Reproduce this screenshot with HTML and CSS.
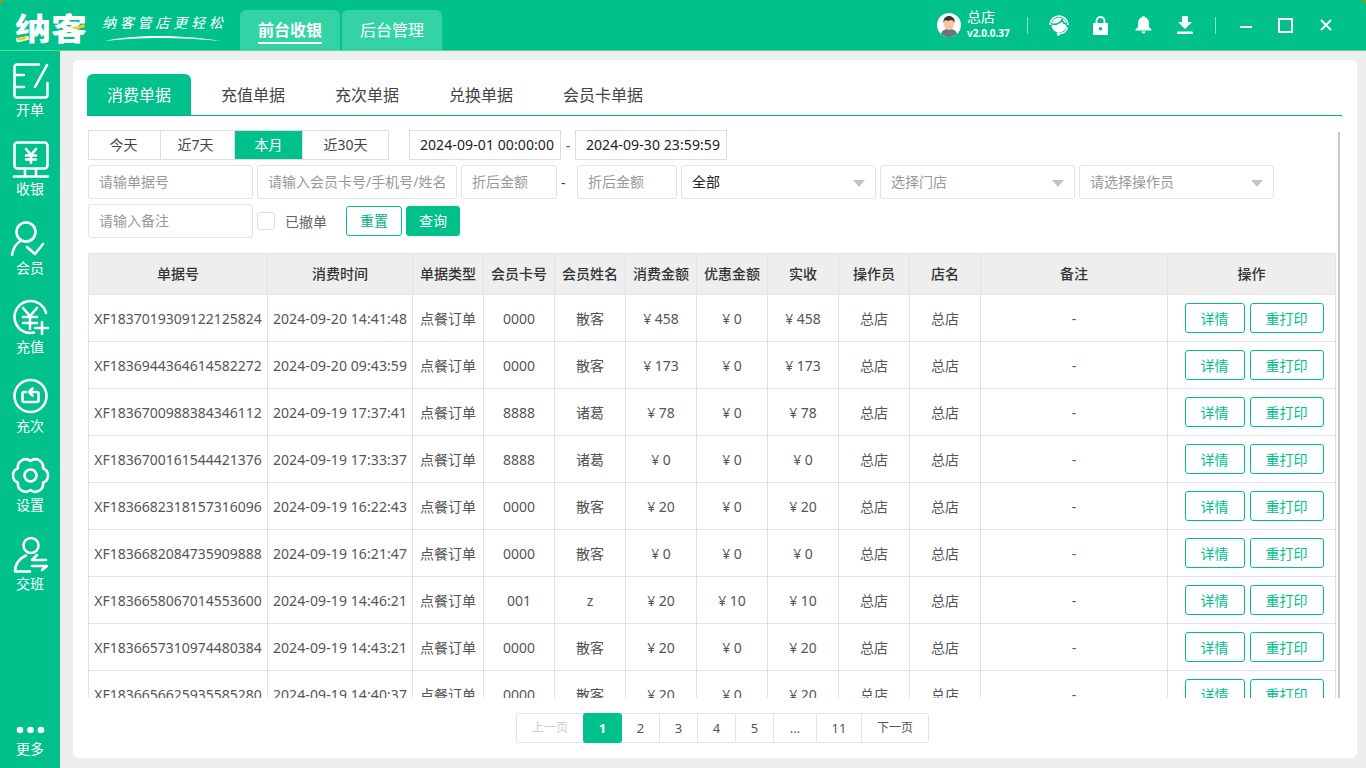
FILE: index.html
```html
<!DOCTYPE html>
<html lang="zh-CN">
  <head>
    <meta charset="UTF-8" />
    <meta name="viewport" content="width=device-width, initial-scale=1.0" />
    <title>纳客</title>
    <link rel="stylesheet" href="styles.css">
  </head>
  <body>
    <header class="topbar">
      <div class="logo">
        <span class="logo-name">纳客</span>
        <svg class="logo-accent" width="72" height="30" viewBox="0 0 72 30">
          <path d="M1 24c4 0 8-1 11-3l-1 4c-4 2-8 2-10-1z" fill="#f7c92c" />
          <path d="M55 13c5 0 10-1 14-3l1 3c-5 2-10 3-15 0z" fill="#f7c92c" />
        </svg>
      </div>
      <div class="slogan">
        <span class="slogan-text">纳客管店更轻松</span>
        <svg class="slogan-line" width="118" height="8" viewBox="0 0 118 8">
          <path d="M1 7C30 1 70 0 117 7C75 3 35 3 1 7z" fill="#fff" />
        </svg>
      </div>
      <nav class="top-tabs">
        <a class="top-tab active"><span>前台收银</span></a>
        <a class="top-tab"><span>后台管理</span></a>
      </nav>
      <div class="top-right">
        <svg class="avatar" width="24" height="24" viewBox="0 0 24 24">
          <circle cx="12" cy="12" r="12" fill="#fff" />
          <path d="M4 21c1-4 4-5 8-5s7 1 8 5a12 12 0 0 1-16 0z" fill="#6b7480" />
          <ellipse cx="12" cy="10.5" rx="5.2" ry="6.5" fill="#f6c6a4" />
          <path d="M6.5 10C6 5 9 3 12 3s6.200 2 5.500 7c-1-2-2-3-3-3-2 1-5 1-6 0-1 .5-1.500 1.500-2 3z" fill="#3a3431" />
        </svg>
        <div class="user">
          <span class="user-name">总店</span>
          <span class="user-version">v2.0.0.37</span>
        </div>
        <i class="top-divider"></i>
        <svg class="tool-headset" width="22" height="24" viewBox="0 0 22 24">
          <path d="M2 12a9 9 0 0 1 18 0" fill="none" stroke="#fff" stroke-width="1.600" />
          <circle cx="11" cy="12" r="7.500" fill="#fff" />
          <path d="M4 11c4 1 8-1 10-4 1 3 3 4 5 4" fill="none" stroke="#00c18b" stroke-width="1.800" />
          <path d="M19 14c0 4-3 6.500-7 6.500" fill="none" stroke="#fff" stroke-width="1.600" />
          <circle cx="10.500" cy="21" r="1.800" fill="#fff" />
        </svg>
        <svg class="tool-lock" width="15" height="19" viewBox="0 0 15 19">
          <path d="M3.500 8V5a4 4 0 0 1 8 0v3" fill="none" stroke="#fff" stroke-width="1.800" />
          <path fill-rule="evenodd" d="M1 7h13a1 1 0 0 1 1 1v10a1 1 0 0 1-1 1H1a1 1 0 0 1-1-1V8a1 1 0 0 1 1-1zm6.500 4a1.800 1.800 0 1 0 0 3.600 1.800 1.800 0 0 0 0-3.600z" fill="#fff" />
        </svg>
        <svg class="tool-bell" width="17" height="18" viewBox="0 0 17 18">
          <path d="M8.500 0a1.500 1.500 0 0 1 1.400 1.200C12.500 2 14 4.200 14 7v4l2.500 2.500v1H.5v-1L3 11V7c0-2.800 1.500-5 4.100-5.800A1.500 1.500 0 0 1 8.500 0z" fill="#fff" />
          <path d="M6.500 15.500h4a2 2 0 0 1-4 0z" fill="#fff" />
        </svg>
        <svg class="tool-download" width="16" height="18" viewBox="0 0 16 18">
          <path d="M5 0h6v6h4l-7 7-7-7h4z" fill="#fff" />
          <rect x="0" y="15.500" width="16" height="2.500" rx="1" fill="#fff" />
        </svg>
        <i class="top-divider win-divider"></i>
        <svg class="win-min" width="12" height="2" viewBox="0 0 12 2"><rect width="12" height="2" fill="#fff" /></svg>
        <svg class="win-max" width="15" height="15" viewBox="0 0 15 15"><rect x="1" y="1" width="13" height="13" fill="none" stroke="#fff" stroke-width="2" /></svg>
        <svg class="win-close" width="12" height="12" viewBox="0 0 12 12"><path d="M1 1l10 10M11 1L1 11" stroke="#fff" stroke-width="1.800" /></svg>
      </div>
    </header>

    <div class="layout">
      <aside class="sidebar">
        <a class="side-item">
          <svg viewBox="-3 0 40 36" class="side-icon">
            <path d="M26 1.500H4A2.500 2.500 0 0 0 1.500 4v28A2.500 2.500 0 0 0 4 34.500h28a2.500 2.500 0 0 0 2.500-2.500V20M1.500 12H11M1.500 24H11M34 2L22 24" />
          </svg>
          <span>开单</span>
        </a>
        <a class="side-item">
          <svg viewBox="-3 0 40 36" class="side-icon">
            <rect x="1.500" y="0.500" width="33" height="26" rx="3" />
            <path d="M12 27v7M23 27v7M1 34.500h34M13 7l5 6 5-6M13 13.500h10M13 17.500h10M18 13v8" />
          </svg>
          <span>收银</span>
        </a>
        <a class="side-item">
          <svg viewBox="-3 0 40 36" class="side-icon">
            <circle cx="13" cy="11" r="9.500" />
            <path d="M-1 34C0 27 4 22 8 19.500M14 26l8 7 8-10" />
          </svg>
          <span>会员</span>
        </a>
        <a class="side-item">
          <svg viewBox="-3 0 40 36" class="side-icon">
            <path d="M33 13A16 16 0 1 0 21 32.600M10 8l7 8 7-8M10 17h14M10 23h14M17 16v13M22 28h13M29 22v12" />
          </svg>
          <span>充值</span>
        </a>
        <a class="side-item">
          <svg viewBox="-3 0 40 36" class="side-icon">
            <circle cx="17.500" cy="17" r="16" />
            <path d="M13 13h-2a1.500 1.500 0 0 0-1.500 1.500v7a1.500 1.500 0 0 0 1.500 1.500h13a1.500 1.500 0 0 0 1.500-1.500v-7a1.500 1.500 0 0 0-1.500-1.500h-7M19.500 9.500L16 13l3.500 3.500" />
          </svg>
          <span>充次</span>
        </a>
        <a class="side-item">
          <svg viewBox="-3 0 40 36" class="side-icon">
            <path d="M17.500 3A7.800 7.800 0 0 1 30.060 10.250 7.800 7.800 0 0 1 30.060 24.750 7.800 7.800 0 0 1 17.500 32 7.800 7.800 0 0 1 4.940 24.750 7.800 7.800 0 0 1 4.940 10.250 7.800 7.800 0 0 1 17.500 3z" />
            <circle cx="17.500" cy="17.500" r="6" />
          </svg>
          <span>设置</span>
        </a>
        <a class="side-item">
          <svg viewBox="-3 0 40 36" class="side-icon">
            <circle cx="18" cy="8.500" r="7.500" />
            <path d="M2 34C2 27 7 21 13 18.500M2 34.500h15M24 18l-5 5h14M19 29h15l-5 4" />
          </svg>
          <span>交班</span>
        </a>
        <a class="side-item side-more">
          <svg viewBox="0 0 40 8" class="more-dots">
            <circle cx="10" cy="4" r="3.300" />
            <circle cx="20.500" cy="4" r="3.300" />
            <circle cx="31" cy="4" r="3.300" />
          </svg>
          <span>更多</span>
        </a>
      </aside>

      <main class="main">
        <section class="card">
          <ul class="tabs">
            <li class="tab active">消费单据</li>
            <li class="tab">充值单据</li>
            <li class="tab">充次单据</li>
            <li class="tab">兑换单据</li>
            <li class="tab">会员卡单据</li>
          </ul>

          <div class="scroll-area">
            <div class="filter-row">
              <div class="range-group">
                <a class="range-btn w-today">今天</a>
                <a class="range-btn w-seven">近7天</a>
                <a class="range-btn w-month active">本月</a>
                <a class="range-btn w-thirty">近30天</a>
              </div>
              <div class="date-box date-start">2024-09-01 00:00:00</div>
              <span class="date-sep">-</span>
              <div class="date-box">2024-09-30 23:59:59</div>
            </div>

            <div class="filter-row row-inputs">
              <input class="field w-no" placeholder="请输单据号" />
              <input class="field w-member" placeholder="请输入会员卡号/手机号/姓名" />
              <input class="field w-money" placeholder="折后金额" />
              <span class="money-sep">-</span>
              <input class="field w-money-end" placeholder="折后金额" />
              <div class="select has-value">全部</div>
              <div class="select">选择门店</div>
              <div class="select">请选择操作员</div>
            </div>

            <div class="filter-row row-inputs">
              <input class="field w-no" placeholder="请输入备注" />
              <label class="check">
                <i class="check-box"></i>
                <span>已撤单</span>
              </label>
              <a class="btn btn-reset">重置</a>
              <a class="btn btn-query">查询</a>
            </div>

            <div class="table-wrap">
              <table class="bills">
                <colgroup>
                  <col class="c-no" /><col class="c-time" /><col class="c-s" /><col class="c-s" /><col class="c-s" /><col class="c-s" /><col class="c-s" /><col class="c-s" /><col class="c-s" /><col class="c-s" /><col class="c-note" /><col class="c-op" />
                </colgroup>
                <thead>
                  <tr><th>单据号</th><th>消费时间</th><th>单据类型</th><th>会员卡号</th><th>会员姓名</th><th>消费金额</th><th>优惠金额</th><th>实收</th><th>操作员</th><th>店名</th><th>备注</th><th>操作</th></tr>
                </thead>
                <tbody>
                  <tr><td>XF1837019309122125824</td><td>2024-09-20 14:41:48</td><td>点餐订单</td><td>0000</td><td>散客</td><td>¥ 458</td><td>¥ 0</td><td>¥ 458</td><td>总店</td><td>总店</td><td>-</td><td class="ops"><a class="op w-detail">详情</a><a class="op w-print">重打印</a></td></tr>
                  <tr><td>XF1836944364614582272</td><td>2024-09-20 09:43:59</td><td>点餐订单</td><td>0000</td><td>散客</td><td>¥ 173</td><td>¥ 0</td><td>¥ 173</td><td>总店</td><td>总店</td><td class="note-blue">-</td><td class="ops"><a class="op w-detail">详情</a><a class="op w-print">重打印</a></td></tr>
                  <tr><td>XF1836700988384346112</td><td>2024-09-19 17:37:41</td><td>点餐订单</td><td>8888</td><td>诸葛</td><td>¥ 78</td><td>¥ 0</td><td>¥ 78</td><td>总店</td><td>总店</td><td>-</td><td class="ops"><a class="op w-detail">详情</a><a class="op w-print">重打印</a></td></tr>
                  <tr><td>XF1836700161544421376</td><td>2024-09-19 17:33:37</td><td>点餐订单</td><td>8888</td><td>诸葛</td><td>¥ 0</td><td>¥ 0</td><td>¥ 0</td><td>总店</td><td>总店</td><td class="note-blue">-</td><td class="ops"><a class="op w-detail">详情</a><a class="op w-print">重打印</a></td></tr>
                  <tr><td>XF1836682318157316096</td><td>2024-09-19 16:22:43</td><td>点餐订单</td><td>0000</td><td>散客</td><td>¥ 20</td><td>¥ 0</td><td>¥ 20</td><td>总店</td><td>总店</td><td>-</td><td class="ops"><a class="op w-detail">详情</a><a class="op w-print">重打印</a></td></tr>
                  <tr><td>XF1836682084735909888</td><td>2024-09-19 16:21:47</td><td>点餐订单</td><td>0000</td><td>散客</td><td>¥ 0</td><td>¥ 0</td><td>¥ 0</td><td>总店</td><td>总店</td><td class="note-blue">-</td><td class="ops"><a class="op w-detail">详情</a><a class="op w-print">重打印</a></td></tr>
                  <tr><td>XF1836658067014553600</td><td>2024-09-19 14:46:21</td><td>点餐订单</td><td>001</td><td>z</td><td>¥ 20</td><td>¥ 10</td><td>¥ 10</td><td>总店</td><td>总店</td><td>-</td><td class="ops"><a class="op w-detail">详情</a><a class="op w-print">重打印</a></td></tr>
                  <tr><td>XF1836657310974480384</td><td>2024-09-19 14:43:21</td><td>点餐订单</td><td>0000</td><td>散客</td><td>¥ 20</td><td>¥ 0</td><td>¥ 20</td><td>总店</td><td>总店</td><td class="note-blue">-</td><td class="ops"><a class="op w-detail">详情</a><a class="op w-print">重打印</a></td></tr>
                  <tr><td>XF1836656625935585280</td><td>2024-09-19 14:40:37</td><td>点餐订单</td><td>0000</td><td>散客</td><td>¥ 20</td><td>¥ 0</td><td>¥ 20</td><td>总店</td><td>总店</td><td>-</td><td class="ops"><a class="op w-detail">详情</a><a class="op w-print">重打印</a></td></tr>
                </tbody>
              </table>
            </div>
          </div>

          <div class="pager">
            <a class="page page-prev">上一页</a>
            <a class="page page-cur">1</a>
            <a class="page page-num">2</a>
            <a class="page page-num">3</a>
            <a class="page page-num">4</a>
            <a class="page page-num">5</a>
            <a class="page page-more">...</a>
            <a class="page page-last">11</a>
            <a class="page page-next">下一页</a>
          </div>
        </section>
      </main>
    </div>
  </body>
</html>
```

FILE: styles.css
```css
* {
  margin: 0;
  padding: 0;
  box-sizing: border-box;
  font-family: "Noto Sans", "Noto Sans CJK SC", sans-serif;
}
body {
  width: 1366px;
  height: 768px;
  overflow: hidden;
  background: #eee;
  color: #555;
  font-size: 14px;
}
a {
  cursor: pointer;
}

/* top bar */
.topbar {
  display: flex;
  height: 51px;
  background: linear-gradient(135deg, #8a9a2a 3px, transparent 3px), linear-gradient(225deg, #8a9a2a 3px, transparent 3px), #00c18b;
  border-bottom: 1px solid #55dc8c;
  color: #fff;
}
.logo {
  position: relative;
  width: 72px;
  height: 50px;
  margin-left: 15px;
}
.logo-name {
  display: block;
  font-size: 36px;
  font-weight: 900;
  line-height: 52px;
  font-family: "Noto Sans CJK SC", sans-serif;
  transform: scaleY(0.86);
}
.logo-accent {
  position: absolute;
  left: 0;
  top: 14px;
}
.slogan {
  position: relative;
  width: 125px;
  margin-left: 15px;
}
.slogan-text {
  display: block;
  margin-top: 13px;
  font-size: 14px;
  line-height: 20px;
  letter-spacing: 3.800px;
  font-style: italic;
  white-space: nowrap;
}
.slogan-line {
  position: absolute;
  left: 2px;
  top: 34px;
}
.top-tabs {
  display: flex;
  gap: 2px;
  margin-left: 13px;
  padding-top: 10px;
}
.top-tab {
  width: 100px;
  height: 40px;
  background: #34d3a6;
  border-radius: 6px 6px 0 0;
  text-align: center;
  font-size: 16px;
  line-height: 40px;
}
.top-tab.active span {
  display: inline-block;
  height: 34px;
  line-height: 40px;
  font-weight: 700;
  border-bottom: 2px solid #fff;
}
.top-right {
  display: flex;
  align-items: center;
  margin-left: auto;
  height: 50px;
  padding-right: 34px;
}
.user {
  display: flex;
  flex-direction: column;
  width: 60px;
  margin-left: 6px;
}
.user-name {
  font-size: 14px;
  line-height: 17px;
}
.user-version {
  font-size: 10px;
  font-weight: 700;
  line-height: 17px;
}
.top-divider {
  width: 1px;
  height: 17px;
  background: rgba(255, 255, 255, 0.55);
}
.tool-headset {
  margin-left: 20px;
}
.tool-lock {
  margin-left: 23px;
}
.tool-bell {
  margin-left: 27px;
}
.tool-download {
  margin-left: 25px;
}
.win-divider {
  margin-left: 22px;
}
.win-min {
  margin-left: 24px;
  margin-top: 4px;
}
.win-max {
  margin-left: 26px;
}
.win-close {
  margin-left: 27px;
}

/* left menu */
.layout {
  display: flex;
  height: 717px;
}
.sidebar {
  display: flex;
  flex-direction: column;
  width: 60px;
  padding-top: 12px;
  background: #00c18b;
  color: #fff;
}
.side-item {
  display: flex;
  flex-direction: column;
  align-items: center;
  height: 79px;
  font-size: 14px;
  line-height: 18px;
}
.side-icon {
  width: 40px;
  height: 36px;
  margin-bottom: 2px;
  fill: none;
  stroke: #fff;
  stroke-width: 2.600;
  stroke-linecap: round;
  stroke-linejoin: round;
  overflow: visible;
}
.side-more {
  height: auto;
  margin-top: auto;
  padding-bottom: 10px;
}
.more-dots {
  width: 40px;
  height: 8px;
  margin-bottom: 6px;
  fill: #fff;
}

/* content card */
.main {
  flex: 1;
  padding: 9px 9px 10px 13px;
}
.card {
  height: 698px;
  padding: 14px 15px 0 14px;
  background: #fff;
  border-radius: 6px;
}
.tabs {
  display: flex;
  height: 42px;
  list-style: none;
  border-bottom: 1px solid #00b184;
}
.tab {
  margin-right: 10px;
  padding: 0 20px;
  height: 41px;
  font-size: 16px;
  line-height: 43px;
  color: #444;
}
.tab.active {
  background: #00c18b;
  color: #fff;
  border-radius: 6px 6px 0 0;
}

/* filters */
.scroll-area {
  position: relative;
  height: 568px;
  margin-top: 14px;
  padding-left: 1px;
  overflow: hidden;
}
.scroll-area::after {
  content: "";
  position: absolute;
  top: 2px;
  bottom: 0;
  left: 1251px;
  width: 2px;
  background: #c8c8c8;
}
.filter-row {
  display: flex;
  align-items: center;
  gap: 4px;
}
.row-inputs {
  margin-top: 5px;
}
.range-group {
  display: flex;
  height: 30px;
  border: 1px solid #ddd;
}
.range-btn {
  border-right: 1px solid #ddd;
  text-align: center;
  font-size: 14px;
  line-height: 28px;
  color: #444;
}
.range-btn:last-child {
  border-right: 0;
}
.range-btn.active {
  background: #00c18b;
  color: #fff;
}
.w-today {
  width: 72px;
  padding-right: 2px;
}
.w-seven {
  width: 74px;
  padding-right: 4px;
}
.w-month {
  width: 68px;
}
.w-thirty {
  width: 85px;
}
.date-box {
  width: 152px;
  height: 30px;
  padding-left: 4px;
  border: 1px solid #ddd;
  text-align: center;
  line-height: 28px;
  letter-spacing: 0.1px;
  color: #222;
}
.date-start {
  margin-left: 16px;
}
.date-sep {
  width: 6px;
  text-align: center;
}
.field,
.select {
  height: 34px;
  padding: 0 10px;
  border: 1px solid #e3e3e3;
  border-radius: 3px;
  font-size: 14px;
  outline: none;
  background: #fff;
}
.field {
  padding-bottom: 2px;
}
.field::placeholder {
  color: #999;
  opacity: 1;
}
.w-no {
  width: 165px;
}
.w-member {
  width: 200px;
}
.w-money {
  width: 96px;
}
.w-money-end {
  width: 100px;
}
.money-sep {
  width: 12px;
  color: #444;
  text-align: left;
}
.select {
  position: relative;
  width: 195px;
  line-height: 32px;
  color: #999;
}
.select.has-value {
  color: #222;
}
.select::after {
  content: "";
  position: absolute;
  right: 10px;
  top: 14px;
  border-left: 6px solid transparent;
  border-right: 6px solid transparent;
  border-top: 7px solid #c4c4c4;
}
.check {
  display: flex;
  align-items: center;
  height: 34px;
  width: 85px;
  color: #666;
  font-size: 14px;
}
.check-box {
  width: 18px;
  height: 18px;
  margin-right: 10px;
  border: 1px solid #ddd;
  border-radius: 3px;
}
.btn {
  height: 30px;
  border-radius: 3px;
  text-align: center;
  font-size: 14px;
  line-height: 28px;
  border: 1px solid #00c18b;
}
.btn-reset {
  width: 56px;
  color: #00b184;
}
.btn-query {
  width: 54px;
  background: #00c18b;
  color: #fff;
}

/* table */
.table-wrap {
  margin-top: 15px;
}
.bills {
  width: 1247px;
  table-layout: fixed;
  border-collapse: collapse;
}
.c-no {
  width: 179px;
}
.c-time {
  width: 145px;
}
.c-s {
  width: 71px;
}
.c-note {
  width: 187px;
}
.c-op {
  width: 168px;
}
.bills th,
.bills td {
  border: 1px solid #e2e2e2;
  text-align: center;
  white-space: nowrap;
  overflow: hidden;
}
.bills th {
  height: 41px;
  padding-bottom: 2px;
  background: #eee;
  color: #333;
  font-size: 14px;
  font-weight: 500;
}
.bills td {
  height: 47px;
  font-size: 14px;
  color: #555;
}
.bills td:nth-child(2) {
  letter-spacing: 0.1px;
}
.bills td.note-blue {
  color: #0b6fc9;
}
.bills td.ops {
  padding-left: 5px;
  font-size: 0;
}
.op {
  display: inline-block;
  height: 30px;
  border: 1px solid #00c18b;
  border-radius: 3px;
  color: #00c18b;
  font-size: 14px;
  line-height: 29px;
}
.w-detail {
  width: 60px;
  margin-right: 5px;
}
.w-print {
  width: 74px;
}

/* pager */
.pager {
  display: flex;
  width: 413px;
  height: 30px;
  margin: 15px 0 0 429px;
  border: 1px solid #e3e3e3;
  border-radius: 3px;
  font-size: 13px;
  color: #555;
  line-height: 28px;
  text-align: center;
}
.page {
  border-left: 1px solid #e3e3e3;
}
.page-prev {
  width: 66px;
  border-left: 0;
  font-size: 12px;
  color: #ccc;
}
.page-cur {
  width: 39px;
  margin: -1px 0;
  height: 30px;
  line-height: 30px;
  background: #00c18b;
  border: 0;
  border-radius: 3px;
  color: #fff;
  font-weight: 700;
}
.page-num {
  width: 38px;
}
.page-cur + .page-num {
  width: 37px;
  border-left: 0;
}
.page-more {
  width: 43px;
}
.page-last {
  width: 45px;
}
.page-next {
  flex: 1;
  font-size: 12px;
}
```
